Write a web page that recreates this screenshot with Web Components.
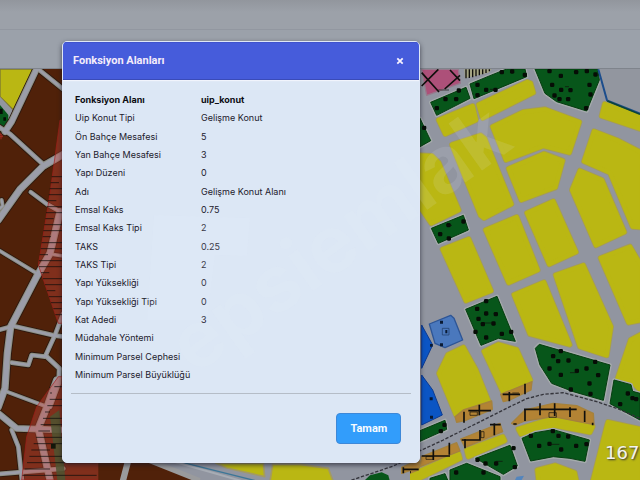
<!DOCTYPE html>
<html lang="tr">
<head>
<meta charset="utf-8">
<title>Fonksiyon Alanları</title>
<style>
html,body{margin:0;height:100%;overflow:hidden}
body{font-family:Inter,"Liberation Sans",sans-serif;background:#969ba4}
</style>
</head>
<body>
<plan-app>
  <page-bars slot="bars"></page-bars>
  <zoning-map slot="map"></zoning-map>
  <info-dialog slot="dialog" heading="Fonksiyon Alanları" action="Tamam">
    <property-table></property-table>
  </info-dialog>
  <site-watermark slot="mark"></site-watermark>
</plan-app>
<script>
const define = (name, html, setup) => customElements.define(name, class extends HTMLElement {
  connectedCallback() {
    if (this.shadowRoot) return;
    this.attachShadow({ mode: 'open' }).innerHTML = html;
    if (setup) setup(this, this.shadowRoot);
  }
});

define('plan-app', `
<style>
:host{display:flex;flex-direction:column;height:100%;position:relative;overflow:hidden}
.map{flex:1;min-height:0;display:flex}
.overlay{position:absolute;inset:0;padding:41px 62px 17px;display:flex;align-items:flex-start}
.mark{position:absolute;inset:0;pointer-events:none}
</style>
<slot name="bars"></slot>
<div class="map"><slot name="map"></slot></div>
<div class="overlay"><slot name="dialog"></slot></div>
<div class="mark"><slot name="mark"></slot></div>`);

define('page-bars', `
<style>
:host{display:block}
.top{height:29px;background:linear-gradient(#92969d,#9ca1a9 12px);border-bottom:1px solid #9297a0}
.sub{height:38px;background:#9ba1aa;border-bottom:1px solid #7f848c}
</style>
<div class="top"></div><div class="sub"></div>`);

define('site-watermark', `
<style>
:host{display:block;height:100%}
svg{display:block;width:100%;height:100%}
text{font:700 79px Inter,"Liberation Sans",sans-serif;fill:#e6effa;fill-opacity:.12}
</style>
<svg viewBox="0 0 640 480" preserveAspectRatio="xMinYMin slice" aria-hidden="true">
<path d="M154 215l96 3-3 38-32-1-8 65-60 0z" fill="#e9f1fb" fill-opacity=".12"/>
<text transform="translate(194 376) rotate(-35.5)">epsiemlak</text></svg>`);

define('info-dialog', `
<style>
:host{display:block;width:358px;min-width:56vw}
section{box-sizing:border-box;border:1px solid #dfe7f6;border-radius:5px;background:#dce7f5;overflow:hidden;box-shadow:0 2px 5px rgba(20,22,35,.65)}
header{display:flex;align-items:center;justify-content:space-between;height:36px;padding:0 10px;background:#465cdb;border-top:1px solid #3f53cd;border-bottom:1px solid #3a4bb8;box-shadow:0 1px 1px #f1f4fc}
h2{margin:0;font:700 11px/14px Roboto,"Liberation Sans",sans-serif;color:#f4ecfa}
button{font:700 11px/14px Roboto,"Liberation Sans",sans-serif;cursor:pointer}
.close{width:18px;height:18px;padding:5px;border:0;background:none;display:block}
svg{display:block;width:8px;height:8px}
.body{padding:11px 8px 0}
hr{height:1px;border:0;background:#b5bdc7;margin:9px 0 0}
footer{display:flex;justify-content:flex-end;padding:19px 18px 18px}
.ok{box-sizing:border-box;width:65px;height:31px;border:1px solid #3d88d8;border-radius:4px;background:#329dfb;color:#f7fbff;padding:0}
</style>
<section role="dialog" aria-labelledby="t">
<header><h2 id="t"></h2><button class="close" aria-label="Kapat"><svg viewBox="0 0 8 8"><path d="M1.3 1.3l5.4 5.4M6.7 1.3L1.3 6.7" stroke="#f7f2ff" stroke-width="1.8"/></svg></button></header>
<div class="body"><slot></slot><hr></div>
<footer><button class="ok"></button></footer>
</section>`, (el, root) => {
  root.querySelector('h2').textContent = el.getAttribute('heading');
  root.querySelector('.ok').textContent = el.getAttribute('action');
});

define('property-table', `
<style>
:host{display:block}
table{width:100%;height:293px;border-collapse:collapse;table-layout:fixed;font-size:9px;line-height:12px;color:#22202c}
th,td{padding:0 0 0 4px;text-align:left;font-weight:400;white-space:nowrap}
th{width:122px}
tr:first-child>*{font-weight:700;color:#0c0c12}
</style>
<table><tbody></tbody></table>`, (el, root) => {
  const rows = [['Fonksiyon Alanı','uip_konut'],['Uip Konut Tipi','Gelişme Konut'],['Ön Bahçe Mesafesi','5'],['Yan Bahçe Mesafesi','3'],['Yapı Düzeni','0'],['Adı','Gelişme Konut Alanı'],['Emsal Kaks','0.75'],['Emsal Kaks Tipi','2'],['TAKS','0.25'],['TAKS Tipi','2'],['Yapı Yüksekliği','0'],['Yapı Yüksekliği Tipi','0'],['Kat Adedi','3'],['Müdahale Yöntemi',''],['Minimum Parsel Cephesi',''],['Minimum Parsel Büyüklüğü','']];
  root.querySelector('tbody').innerHTML = rows.map(([k, v]) => `<tr><th scope="row">${k}</th><td>${v}</td></tr>`).join('');
});

define('zoning-map', `
<style>
:host{display:block;flex:1;min-width:0;position:relative;overflow:hidden}
svg{display:block;width:100%;height:100%}
svg *{stroke-linejoin:round}
.edge{fill:#a3964f;stroke:#a39a5c;stroke-width:18}
.y{fill:#bab713;stroke:#bab713;stroke-width:13}
.halo{fill:#a9b0ad;stroke:#a4aaab;stroke-width:11}
.g{fill:#07561a;stroke:#063d10;stroke-width:3}
.o{fill:#b38334;stroke:#a5823d;stroke-width:4}
.k{fill:none;stroke:#100f0c;stroke-width:5}
.thin{stroke-width:2}
.tree{fill:#060d06}
.roads path{fill:none;stroke-linecap:round}
.a path{stroke:#2a1710}.b path{stroke:#8f9084}.c path{stroke:#9b9da9}
output{position:absolute;right:0;bottom:15px;width:35px;overflow:hidden;font:18px/24px "DejaVu Sans",sans-serif;color:#f3f3f0;text-shadow:1px 1px 2px #333}
</style>
<svg viewBox="0 69 640 411" preserveAspectRatio="xMinYMin slice" role="img" aria-label="İmar planı haritası">
<rect y="69" width="640" height="411" fill="#9195a0"/>
<g transform="translate(410 60) scale(.33333)">
 <path d="M565 25L592 121L690 161V25Z" fill="#92969f"/>
 <g id="yellow"></g><g id="green"></g>
 <path d="M35 28H145L151 70L50 106Z" fill="#ad5079" stroke="#97798c" stroke-width="4"/>
 <path class="k" d="M35 38L87 96M35 78L85 28M104 87L150 46M120 30L150 62"/>
 <path d="M163 28H245L235 38L165 54Z" fill="#a4a482"/>
 <path class="k" style="stroke-width:4" d="M168 28V55M178 28V54M188 28V52M198 28V49M208 28V46M218 28V43M228 28V39M238 28V34"/>
 <path d="M565 28L591 121L690 161" fill="none" stroke="#1c4d8c" stroke-width="6"/>
 <path d="M592 123L690 163" fill="none" stroke="#0c4538" stroke-width="5"/>
 <path d="M35 795L68 855L35 925ZM35 945L68 990L97 1065L35 1095Z" fill="#0b55c4" stroke="#0b3a93" stroke-width="3"/>
 <path d="M58 792L122 766L132 775L158 840L105 863L75 850Z" fill="#4a78bd" stroke="#2d5596" stroke-width="4"/>
 <path d="M97 805h20v20h-20z" fill="none" stroke="#1e3a63" stroke-width="2"/>
 <path d="M106 810h6v10h-6zM90 782h9v9h-9zM60 852h8v8h-8zM90 850h9v9h-9zM59 1012h9v9h-9zM60 1067h9v9h-9z" fill="#0a1a33"/>
 <path class="o" d="M135 1070L160 1050L245 1023L247 1048L165 1082L140 1087ZM272 1003L366 965L363 990L300 1020L280 1025ZM305 1090L345 1050L430 1030L500 1037L550 1060L552 1094L430 1070L345 1083L315 1095ZM35 1190L140 1148L150 1173L30 1220ZM152 1137L270 1090L278 1115L165 1162ZM-20 1230L30 1207L25 1230L-20 1248Z"/>
 <path class="k" d="M162 1055V1088M208 1034V1066M175 1052H243M298 996V1024M278 1003H330M345 971V1003M345 1050V1083M342 1048H500M390 1030V1066M434 1030V1068M480 1042V1071M524 1052V1086M310 1092H320M548 1088V1096M70 1168V1200M35 1188H120M118 1148V1184M165 1137V1165M155 1140H212M210 1110V1142M253 1090V1126M240 1094H272M0 1220H28M0 1220V1240"/>
 <path class="k thin" d="M180 1056h22v10h-22zM417 1058h22v14h-22zM213 1115h9v18h-9zM48 1190h22v8h-22zM307 999h20"/>
 <path d="M-210 1273L-110 1240L-40 1205L35 1170L100 1140L200 1090L300 1040L350 1016L400 1003L460 998L560 1025L620 1045L690 1075" fill="none" stroke="#34343b" stroke-width="4" stroke-dasharray="10 5"/>
 <path d="M315 1260L320 1250L342 1247L335 1260Z" fill="#5385bd"/>
 <g class="tree" id="trees"></g>
</g>
<g transform="translate(0 60) scale(.33333)">
 <path d="M0 27H300V1260H0Z" fill="#502109"/>
 <path d="M0 27H100L40 150L0 110Z" fill="#bab713" stroke="#7d7830" stroke-width="4"/>
 <path d="M0 110L38 150L25 215L0 200Z" fill="#92969f"/>
 <path d="M0 135L25 165V182L12 200L0 195Z" fill="#07561a"/>
 <path d="M0 146h8v16H0zM10 172h8v10h-8z" fill="#060d06"/>
 <path d="M0 222l8 4M0 230h9M3 220v18" stroke="#a52a22" stroke-width="3"/>
 <g class="roads" id="roads"></g>
 <path d="M180 180L150 400L115 615L175 790H187V180ZM175 950L110 1040L80 1130L65 1260H300V950Z" fill="#c8453a" fill-opacity=".4" stroke="#a31d19" stroke-width="2"/>
 <path d="M150 1070L178 1050L196 1260H172Z" fill="#4e5430" fill-opacity=".85"/>
 <path d="M153 1152h14v14h-14z" fill="#14170a"/>
 <path class="k" id="hatch" style="stroke-width:3" stroke-opacity=".75"/>
</g>
<g transform="translate(60 380) scale(.33333)">
 <path d="M115 240H300L430 310H115Z" fill="#502109"/>
 <path d="M205 240L188 305M270 240L420 300" stroke="#9a9b9d" stroke-width="19"/>
 <path d="M285 240L460 310H1050V240Z" fill="#9195a0"/>
 <path d="M370 248L590 303" stroke="#3c7697" stroke-width="4"/><path d="M345 246L545 303" stroke="#a7acb4" stroke-width="6"/>
 <path d="M468 250H610L614 290L500 264ZM638 253H720L805 265L820 305H630Z" fill="#bab713" stroke="#a39a62" stroke-width="5"/>
 <path d="M915 300L930 286L965 277L985 286L990 305H915Z" fill="#07561a"/>
 <path class="o" d="M1025 262L1078 238V262L1025 280Z"/>
 <path class="k" d="M1030 268H1076M1030 262V280"/>
 <path d="M860 305L930 282L1000 258L1070 225" fill="none" stroke="#34343b" stroke-width="4" stroke-dasharray="10 5"/>
</g>
</svg>
<output>167</output>`, (el, root) => {
  const $ = id => root.getElementById(id);
  const paths = (cls, list) => list.map(d => `<path class="${cls}" d="M${d}Z"/>`).join('');
  // Residential blocks
  const yellow = ['206 134L352 66L362 70L370 98L218 174','86 180L188 138L198 180L106 222','248 200L340 156L405 148L508 186L478 278L400 258L288 300','126 254L212 226L224 236L304 432L222 474L212 466','30 286L66 288L86 308L146 450L64 490L30 440','296 326L402 281L458 302L436 382L334 420','584 132L695 170V208L575 168','552 214L620 240L695 278V502L668 500L600 338L522 304','510 332L576 360L643 516L558 556L486 390','351 459L430 424L498 576L418 613','227 510L320 471L383 630L296 668','98 568L176 537L243 692L168 722','312 704L402 667L479 854L360 822','437 645L520 616L603 800L590 886L510 860','572 594L660 560L695 620V780L656 788','695 822L662 840L622 958L664 962L695 995','160 862L114 884L87 940L138 1064L238 1030L198 930','222 874L265 853L320 869L361 960L280 998','325 1107L430 1074L548 1100L540 1117L430 1096L333 1122','-5 1248L146 1182L150 1196L30 1254L-20 1275','170 1170L278 1130L284 1142L175 1190','594 1086L695 1108V1265H548L590 1100','382 1230L435 1216L494 1238L500 1265H386'];
  $('yellow').innerHTML = paths('edge', yellow) + paths('y', yellow);
  // Parks
  const green = ['62 127L168 82L180 115L80 166','180 72L240 47L290 27H345L350 50L192 116','375 27H563L568 60L530 153L440 125L405 100','30 175L62 242L30 260','64 505L160 466L175 510L85 550','167 748L261 709L316 844L265 835L213 856','376 865L388 853L600 915L580 1021L490 995L425 970L390 915','612 960L663 974L668 994L690 1000V1080L600 1031','30 1112L105 1081L110 1108L30 1144','336 1135L375 1118L430 1109L538 1140L525 1204L480 1195L430 1190L362 1203','197 1195L300 1156L322 1218L280 1243','120 1230L170 1210L270 1250V1265H120','60 1255L105 1241L115 1265H60'];
  $('green').innerHTML = paths('halo', green) + paths('g', green);
  const trees = [[80,145],[106,118],[138,118],[146,92],[202,75],[202,106],[228,90],[256,90],[275,37],[306,35],[344,45],[418,34],[452,48],[498,37],[530,34],[556,44],[426,75],[453,90],[481,91],[538,75],[541,104],[433,107],[448,118],[474,118],[528,145],[42,204],[90,523],[115,496],[160,485],[116,536],[228,724],[201,747],[228,761],[257,763],[205,777],[218,793],[250,791],[196,816],[275,822],[303,816],[228,833],[452,874],[429,889],[444,904],[475,902],[555,906],[418,926],[529,926],[452,945],[500,933],[564,946],[538,971],[541,1002],[482,989],[653,1001],[667,1015],[630,1033],[678,1018],[103,1095],[92,1114],[428,1114],[362,1128],[445,1128],[474,1130],[387,1158],[418,1152],[453,1169],[498,1158],[529,1153],[226,1211],[258,1211],[202,1200],[310,1165],[314,1222],[138,1238],[220,1238]];
  $('trees').innerHTML = trees.map(([x, y]) => `<rect x="${x - 6}" y="${y - 7}" width="13" height="13" rx="4"/>`).join('') +
    '<path class="k thin" d="M85 90h32M108 496h18M220 789h32M480 938h22M420 1153h28M258 1204h20M240 88h16M465 80h12"/>';
  // Streets of the old quarter: [width, path]
  const roads = [[18,'112 22L35 185L15 215'],[12,'118 30L190 88'],[13,'-5 200L30 222L135 318'],[20,'195 280L130 318L60 388L-5 480'],[11,'92 396L140 432L190 460'],[10,'-5 450L8 438L5 420'],[10,'-5 570L110 640'],[20,'180 455L150 580L110 650L32 800L22 880L15 985L-5 1040'],[9,'150 582L190 588'],[12,'-5 810L40 798L160 826L190 830'],[12,'190 760L165 825L135 890L95 885L85 915L35 908'],[13,'140 890L178 925L176 970L150 1040'],[10,'20 995L140 1040'],[18,'-5 1060L50 1105L190 1110'],[20,'170 960L145 1030L115 1105L150 1260'],[12,'35 1110L55 1160L66 1262'],[12,'-5 1242L190 1226']];
  $('roads').innerHTML = [['a', 7], ['b', 2], ['c', -4]].map(([c, extra]) =>
    `<g class="${c}">` + roads.map(([w, d]) => `<path stroke-width="${w + extra}" d="M${d}"/>`).join('') + '</g>').join('');
  // Hatching of the risk area
  let h = '';
  for (let y = 350, i = 0; y < 770; y += 18, i++) {
    const x = y < 615 ? 180 - (y - 180) * .15 : 115 + (y - 615) * .34;
    h += `M${Math.round(x)} ${y}H${i % 3 === 1 ? Math.round(x) + 25 : 187}`;
  }
  for (let y = 980, i = 0; y < 1260; y += 19, i++) h += `M${Math.round(170 - (y - 960) * .36)} ${y}H${i % 3 === 1 ? 150 : 290}`;
  $('hatch').setAttribute('d', h);
});
</script>
</body>
</html>
